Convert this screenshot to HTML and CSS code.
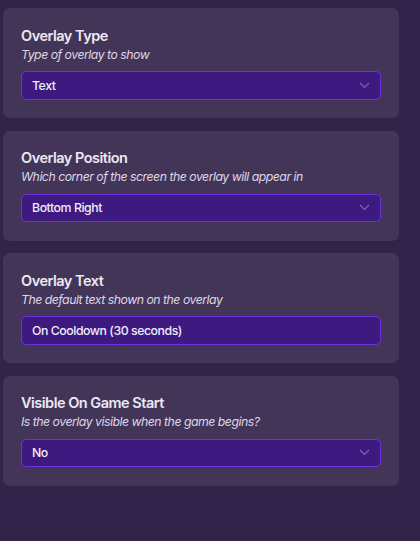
FILE: index.html
```html
<!DOCTYPE html>
<html>
<head>
<meta charset="utf-8">
<link rel="stylesheet" href="styles.css">
</head>
<body>
<div class="list">
  <div class="card">
    <div class="title">Overlay Type</div>
    <div class="desc">Type of overlay to show</div>
    <div class="field select"><span>Text</span><svg class="chev" width="11" height="7" viewBox="0 0 11 7"><path d="M1 1l4.5 4.5L10 1" fill="none" stroke="currentColor" stroke-width="1.2"/></svg></div>
  </div>
  <div class="card">
    <div class="title">Overlay Position</div>
    <div class="desc">Which corner of the screen the overlay will appear in</div>
    <div class="field select"><span>Bottom Right</span><svg class="chev" width="11" height="7" viewBox="0 0 11 7"><path d="M1 1l4.5 4.5L10 1" fill="none" stroke="currentColor" stroke-width="1.2"/></svg></div>
  </div>
  <div class="card">
    <div class="title">Overlay Text</div>
    <div class="desc">The default text shown on the overlay</div>
    <div class="field"><span>On Cooldown (30 seconds)</span></div>
  </div>
  <div class="card">
    <div class="title">Visible On Game Start</div>
    <div class="desc">Is the overlay visible when the game begins?</div>
    <div class="field select"><span>No</span><svg class="chev" width="11" height="7" viewBox="0 0 11 7"><path d="M1 1l4.5 4.5L10 1" fill="none" stroke="currentColor" stroke-width="1.2"/></svg></div>
  </div>
</div>
</body>
</html>
```
FILE: styles.css
```css
html, body {
  margin: 0;
  height: 100%;
}
body {
  background: #31234a;
  font-family: Inter, "Noto Sans", sans-serif;
  color: #ebe6f2;
  overflow: hidden;
}
.list {
  display: flex;
  flex-direction: column;
  gap: 12.5px;
  padding: 8px 21px 0 3px;
}
.card {
  background: #433557;
  border-radius: 7px;
  height: 110px;
  box-sizing: border-box;
  padding: 18.5px 18px 0 18px;
}
.title {
  font-size: 14.5px;
  font-weight: 600;
  line-height: 17px;
  letter-spacing: -0.5px;
  color: #ece8f2;
}
.desc {
  font-size: 12.3px;
  font-style: italic;
  line-height: 15px;
  margin-top: 3px;
  letter-spacing: -0.5px;
  color: #ddd6e8;
}
.field {
  margin-top: 9.5px;
  height: 28.5px;
  box-sizing: border-box;
  border: 1px solid #6a34dc;
  border-radius: 5px;
  background: #3e1a80;
  display: flex;
  align-items: center;
  justify-content: space-between;
  padding: 0 10px 0 10px;
  font-size: 12.3px;
  font-weight: 500;
  letter-spacing: -0.45px;
  color: #f0ecf8;
}
.chev {
  color: #8061b8;
}
```
